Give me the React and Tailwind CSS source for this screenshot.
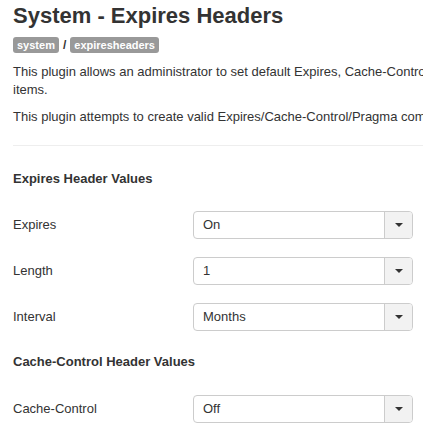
import React from "react";

const SelectBox = ({ value }) => (
  <div className="flex h-[28px] w-[220px] rounded-[4px] border border-[#ccc] bg-white">
    <div className="flex flex-1 items-center pl-[9px] text-[13px] text-[#333]">{value}</div>
    {/* dropdown toggle */}
    <div className="flex w-[28px] items-center justify-center rounded-r-[3px] border-l border-[#ccc] bg-[#f2f2f2]">
      <span className="block h-0 w-0 border-x-[4px] border-t-[4px] border-x-transparent border-t-[#333]" />
    </div>
  </div>
);

const FieldRow = ({ label, value, className = "" }) => (
  <div className={`flex h-[28px] items-center ${className}`}>
    <div className="w-[180px] text-[13px] leading-[18px] text-[#333]">{label}</div>
    <SelectBox value={value} />
  </div>
);

const Badge = ({ children }) => (
  <span className="inline-block h-[16px] rounded-[3px] bg-[#999] px-[4px] text-[11px] font-bold leading-[16px] text-white">
    {children}
  </span>
);

export default function App() {
  return (
    <div className="h-[433px] w-[423px] overflow-hidden bg-white font-['Liberation_Sans',Arial,sans-serif] text-[#333]">
      <div className="w-[700px] pl-[13px]">
        {/* Header */}
        <h1 className="mt-[4px] text-[22px] font-bold leading-[24px] text-[#333]">System - Expires Headers</h1>
        <div className="mt-[9px] flex items-center gap-[4px]">
          <Badge>system</Badge>
          <span className="text-[12px] font-bold leading-[16px] text-[#333]">/</span>
          <Badge>expiresheaders</Badge>
        </div>

        {/* Description */}
        <p className="mt-[10px] whitespace-nowrap text-[13px] leading-[18px]">
          This plugin allows an administrator to set default Expires, Cache-Control and Pragma headers for the site's
          <br />
          items.
        </p>
        <p className="mt-[9px] whitespace-nowrap text-[13px] leading-[18px]">
          This plugin attempts to create valid Expires/Cache-Control/Pragma combinations for every response.
        </p>

        <div className="mt-[19px] border-t border-[#eee]" />

        {/* Expires fieldset */}
        <div className="mt-[24px] text-[13px] font-bold leading-[18px]">Expires Header Values</div>
        <div className="w-[410px]">
          <FieldRow label="Expires" value="On" className="mt-[23px]" />
          <FieldRow label="Length" value="1" className="mt-[18px]" />
          <FieldRow label="Interval" value="Months" className="mt-[18px]" />
        </div>

        {/* Cache-Control fieldset */}
        <div className="mt-[22px] text-[13px] font-bold leading-[18px]">Cache-Control Header Values</div>
        <div className="w-[410px]">
          <FieldRow label="Cache-Control" value="Off" className="mt-[24px]" />
        </div>
      </div>
    </div>
  );
}
